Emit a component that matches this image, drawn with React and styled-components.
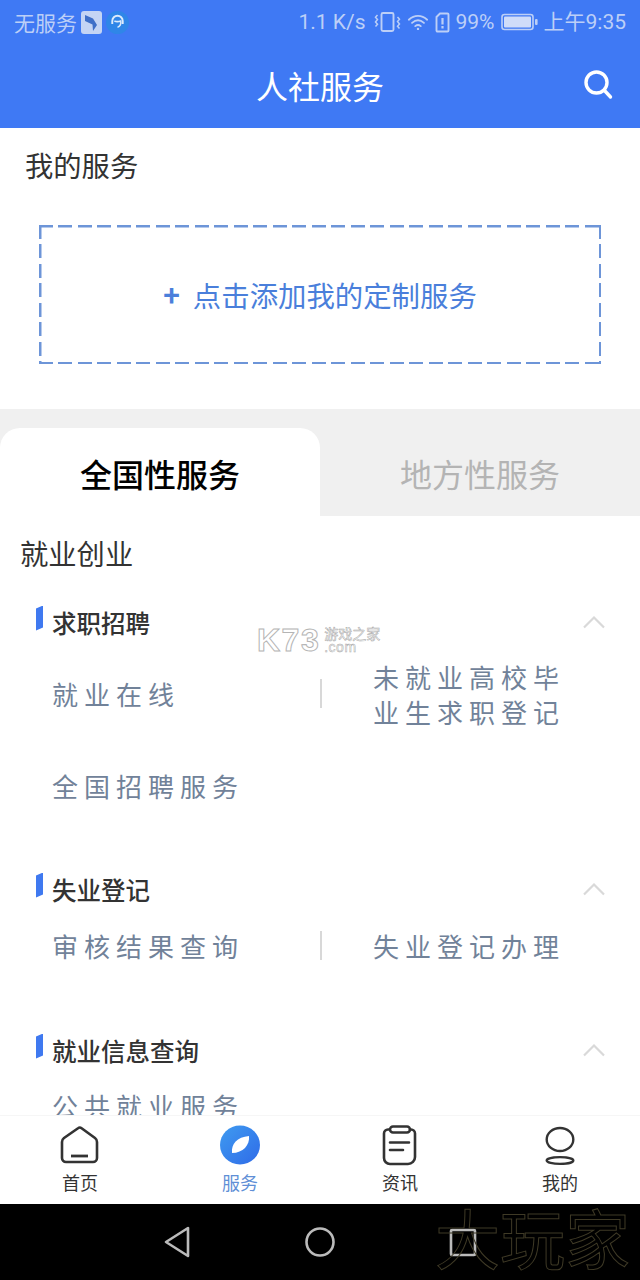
import styled, { createGlobalStyle } from "styled-components";

const cjk = `"Noto Sans CJK SC", "Noto Sans", sans-serif`;

const Global = createGlobalStyle`
  html, body { margin: 0; padding: 0; background: #fff; }
  body { font-family: ${cjk}; }
`;

const Page = styled.div`
  position: relative;
  width: 640px;
  height: 1280px;
  display: flex;
  flex-direction: column;
  overflow: hidden;
`;

const Top = styled.div`
  background: #3f79f4;
  height: 128px;
  flex: none;
  display: flex;
  flex-direction: column;
`;
const StatusBar = styled.div`
  height: 44px;
  padding: 0 14px;
  display: flex;
  align-items: center;
  justify-content: space-between;
  color: #bccff7;
  font-size: 21px;
`;
const StatusGroup = styled.div`
  display: flex;
  align-items: center;
  gap: ${(p) => p.$gap || 4}px;
`;
const StatusText = styled.span`
  font-family: ${(p) => (p.$latin ? `"Roboto", ${cjk}` : cjk)};
  line-height: 44px;
  margin-right: ${(p) => p.$after || 0}px;
`;
const HeaderBar = styled.div`
  position: relative;
  flex: 1;
  display: flex;
  align-items: center;
  justify-content: center;
  padding-bottom: 2px;
`;
const HeaderTitle = styled.h1`
  margin: 0;
  color: #fff;
  font-size: 32px;
  font-weight: 400;
  line-height: 40px;
`;
const SearchBtn = styled.div`
  position: absolute;
  right: 26px;
  top: 24px;
  width: 32px;
  height: 32px;
`;

const Scroll = styled.div`
  flex: 1;
  min-height: 0;
  overflow: hidden;
  background: #fff;
`;
const MyServices = styled.section`
  height: 281px;
  padding: 0 39px 0 25px;
  display: flex;
  flex-direction: column;
`;
const MyTitle = styled.div`
  font-size: 28.3px;
  line-height: 38px;
  margin-top: 18px;
  color: #333;
`;
const dashH = "repeating-linear-gradient(90deg, #6d95d8 0 14px, transparent 14px 19.5px)";
const dashV = "repeating-linear-gradient(180deg, #6d95d8 0 14px, transparent 14px 19.5px)";
const AddBox = styled.div`
  margin: 41px 0 0 14px;
  height: 139px;
  width: 562px;
  flex: none;
  box-sizing: border-box;
  background-image: ${dashH}, ${dashH}, ${dashV}, ${dashV};
  background-size: 100% 2.5px, 100% 2.5px, 2.5px 100%, 2.5px 100%;
  background-position: 0 0, 0 100%, 0 0, 100% 0;
  background-repeat: no-repeat;
  display: flex;
  align-items: center;
  justify-content: center;
  gap: 13px;
  color: #4a7fdb;
  font-size: 28.4px;
  line-height: 40px;
`;
const Plus = styled.span`
  font-weight: 500;
  font-size: 30px;
  font-family: "Roboto", sans-serif;
`;

const TabStrip = styled.div`
  display: flex;
  background: #f0f0f0;
  padding-top: 19px;
  height: 88px;
`;
const Tab = styled.div`
  width: 320px;
  padding-top: 2px;
  display: flex;
  align-items: center;
  justify-content: center;
  font-size: 32px;
  font-weight: ${(p) => (p.$active ? 500 : 400)};
  color: ${(p) => (p.$active ? "#000" : "#b4b4b4")};
  background: ${(p) => (p.$active ? "#fff" : "transparent")};
  border-radius: ${(p) => (p.$active ? "20px 20px 0 0" : "0")};
`;

const CategoryTitle = styled.div`
  font-size: 28.3px;
  line-height: 38px;
  color: #333;
  padding: 18px 0 0 20px;
`;

const Group = styled.section`
  padding: 0 0 0 36px;
  margin-top: ${(p) => p.$top}px;
`;
const GroupHead = styled.div`
  height: 36px;
  display: flex;
  align-items: center;
  gap: 9px;
  padding-right: 34px;
  svg { margin-top: -3px; }
`;
const Marker = styled.i`
  width: 7px;
  height: 25px;
  margin-top: -10px;
  background: #3f79f0;
  clip-path: polygon(0 12%, 100% 0, 100% 88%, 0 100%);
`;
const GroupTitle = styled.div`
  flex: 1;
  font-size: 24.5px;
  font-weight: 500;
  color: #333;
  line-height: 36px;
`;
const ItemRow = styled.div`
  display: grid;
  grid-template-columns: 284px 1fr;
  align-items: center;
  height: ${(p) => p.$height}px;
`;
const ItemCell = styled.div`
  font-size: 26px;
  line-height: 35px;
  letter-spacing: 6px;
  color: #718299;
  padding-left: ${(p) => (p.$right ? "53px" : "16px")};
  width: ${(p) => (p.$right ? "194px" : "auto")};
  box-sizing: content-box;
`;
const Divider = styled.span`
  position: absolute;
  left: 284px;
  top: ${(p) => p.$top || 0}px;
  bottom: 0;
  margin: auto 0;
  width: 2px;
  height: 29px;
  background: #d8d8d8;
`;
const RowWrap = styled.div`
  position: relative;
  padding-top: ${(p) => p.$top || 0}px;
`;

const TabBar = styled.nav`
  flex: none;
  height: 89px;
  background: #fff;
  border-top: 1px solid #f6f6f6;
  box-sizing: border-box;
  display: grid;
  grid-template-columns: repeat(4, 1fr);
`;
const NavItem = styled.div`
  display: flex;
  flex-direction: column;
  align-items: center;
  padding-top: 9px;
  font-size: 18px;
  line-height: 24px;
  color: ${(p) => (p.$active ? "#5f8fd6" : "#333")};
  svg { display: block; margin-bottom: 5px; overflow: visible; }
`;

const SystemBar = styled.div`
  flex: none;
  height: 76px;
  background: #000;
  display: flex;
  align-items: center;
  justify-content: center;
  gap: 112px;
`;

const WatermarkLogo = styled.div`
  position: absolute;
  left: 257px;
  top: 622px;
  display: flex;
  align-items: center;
  gap: 4px;
  pointer-events: none;
`;
const LogoMark = styled.span`
  font-family: "Liberation Sans", sans-serif;
  font-size: 32px;
  font-weight: 700;
  line-height: 36px;
  letter-spacing: 1.5px;
  color: #fff;
  -webkit-text-stroke: 1px #b4b4b4;
`;
const LogoSub = styled.span`
  display: flex;
  flex-direction: column;
  align-items: flex-start;
  font-size: 14px;
  line-height: 14px;
  color: #fff;
  -webkit-text-stroke: 0.5px #a8a8a8;
`;
const LogoDomain = styled.span`
  font-family: "Liberation Sans", sans-serif;
  letter-spacing: 0.5px;
`;
const WatermarkCorner = styled.div`
  position: absolute;
  right: 10px;
  bottom: 16px;
  font-family: ${cjk};
  font-size: 65px;
  line-height: 56px;
  color: transparent;
  -webkit-text-stroke: 1px #3f3a26;
  pointer-events: none;
`;

const Search = () => (
  <svg width="32" height="32" viewBox="0 0 32 32" fill="none" stroke="#fff" strokeWidth="3.4" strokeLinecap="round">
    <circle cx="14.5" cy="14.5" r="10.5" />
    <path d="M22.5 22.5L28.5 29" />
  </svg>
);

const Vibrate = () => (
  <svg width="27" height="22" viewBox="0 0 27 22" fill="none" stroke="#bccff7" strokeWidth="1.9">
    <rect x="7.5" y="2" width="12" height="18" rx="1.5" />
    <path d="M3.5 4l-2 2.3 2 2.3-2 2.4 2 2.3-2 2.3M23.5 6l2 2.3-2 2.3 2 2.4-2 2.3 2 2.3" strokeWidth="1.5" />
  </svg>
);

const Wifi = () => (
  <svg width="22" height="20" viewBox="0 0 24 20" fill="none" stroke="#bccff7" strokeWidth="2" strokeLinecap="round">
    <path d="M2 7.5C8 2 16 2 22 7.5M5.5 11c4-3.5 9-3.5 13 0M9 14.5c2-1.6 4-1.6 6 0" />
    <circle cx="12" cy="17.5" r="1.3" fill="#bccff7" stroke="none" />
  </svg>
);

const SimAlert = () => (
  <svg width="15" height="21" viewBox="0 0 15 21" fill="none" stroke="#bccff7" strokeWidth="1.9">
    <path d="M5 1.5H12.5a1 1 0 0 1 1 1V18.5a1 1 0 0 1-1 1H2.5a1 1 0 0 1-1-1V5z" />
    <path d="M7.5 6v6.5M7.5 14v2.5" strokeWidth="2.2" />
  </svg>
);

const Battery = () => (
  <svg width="37" height="18" viewBox="0 0 37 18">
    <rect x="1" y="1.5" width="31" height="15" rx="2.5" fill="none" stroke="#bccff7" strokeWidth="1.6" />
    <rect x="3" y="3.5" width="27" height="11" rx="1" fill="#cfdcf9" />
    <rect x="34" y="6" width="2.6" height="6" rx="1" fill="#bccff7" />
  </svg>
);

const AppBadge = () => (
  <svg width="21" height="23" viewBox="0 0 21 23">
    <rect width="21" height="23" rx="3" fill="#c4d4f4" />
    <path d="M4 4L12 7.5L16 14L12 20L11.5 13.5L4 10z" fill="#3f6fc8" />
  </svg>
);

const AgentBadge = () => (
  <svg width="23" height="23" viewBox="0 0 22 22" fill="none">
    <circle cx="11" cy="11" r="11" fill="#2f86e8" />
    <path d="M6 12.5V9.5a5 5 0 0 1 10 0V12.5" stroke="#dcebfc" strokeWidth="1.8" />
    <path d="M8 9.5c2 1 4 .8 6 0 .8 2.8-.6 5.5-3 6" stroke="#dcebfc" strokeWidth="1.5" />
  </svg>
);

const Chevron = () => (
  <svg width="24" height="14" viewBox="0 0 24 14" fill="none" stroke="#d9d9d9" strokeWidth="2.2">
    <path d="M2 12.5L12 2.5L22 12.5" />
  </svg>
);

const HomeIcon = () => (
  <svg width="40" height="40" viewBox="0 0 40 40" fill="none" stroke="#333" strokeWidth="2.6" strokeLinejoin="round">
    <path d="M18 3.2a3 3 0 0 1 3.6 0L35 13a5 5 0 0 1 2 4V33a4 4 0 0 1-4 4H6a4 4 0 0 1-4-4V17a5 5 0 0 1 2-4z" />
    <path d="M11 31h17" strokeWidth="2.8" />
  </svg>
);

const LeafIcon = () => (
  <svg width="40" height="40" viewBox="0 0 40 40">
    <defs>
      <linearGradient id="leafBg" x1="0" y1="0" x2="1" y2="1">
        <stop offset="0" stopColor="#3f9bf0" />
        <stop offset="1" stopColor="#2f6be8" />
      </linearGradient>
    </defs>
    <ellipse cx="20" cy="20" rx="20" ry="19.5" fill="url(#leafBg)" />
    <path d="M12 28C11 19 17 12 29 11C30 20 23 28 12 28z" fill="#fff" />
  </svg>
);

const NewsIcon = () => (
  <svg width="36" height="40" viewBox="0 0 36 40" fill="none" stroke="#333" strokeWidth="2.6" strokeLinecap="round">
    <path d="M7 4.5H6a4 4 0 0 0-4 4V33a6 6 0 0 0 6 6H26a7 7 0 0 0 7-7V8.5a4 4 0 0 0-4-4H28" />
    <rect x="8" y="1.5" width="20" height="6" rx="3" />
    <path d="M8 17.5H27M8 25H21" />
  </svg>
);

const MeIcon = () => (
  <svg width="32" height="40" viewBox="0 0 32 40" fill="none" stroke="#333" strokeWidth="2.4">
    <ellipse cx="16" cy="14.5" rx="13.3" ry="11.5" />
    <ellipse cx="16" cy="35.5" rx="13.3" ry="3.4" />
  </svg>
);

const BackKey = () => (
  <svg width="30" height="34" viewBox="0 0 30 34" fill="none" stroke="#bbb" strokeWidth="2.6" strokeLinejoin="round">
    <path d="M26 3V31L4 17z" />
  </svg>
);

const HomeKey = () => (
  <svg width="32" height="32" viewBox="0 0 32 32" fill="none" stroke="#bbb" strokeWidth="2.6">
    <circle cx="16" cy="16" r="13.5" />
  </svg>
);

const RecentKey = () => (
  <svg width="30" height="32" viewBox="0 0 30 32" fill="none" stroke="#bbb" strokeWidth="2.6" strokeLinejoin="round">
    <rect x="3" y="4" width="24" height="25" rx="1" />
  </svg>
);

const groups = [
  {
    title: "求职招聘",
    top: 33,
    rows: [
      { left: "就业在线", right: "未就业高校毕业生求职登记", height: 93, top: 6, divider: true },
      { left: "全国招聘服务", height: 90 },
    ],
  },
  {
    title: "失业登记",
    top: 42,
    rows: [{ left: "审核结果查询", right: "失业登记办理", height: 74, divider: true }],
  },
  {
    title: "就业信息查询",
    top: 51,
    rows: [{ left: "公共就业服务", height: 72 }],
  },
];

const navItems = [
  { label: "首页", icon: <HomeIcon /> },
  { label: "服务", icon: <LeafIcon />, active: true },
  { label: "资讯", icon: <NewsIcon /> },
  { label: "我的", icon: <MeIcon /> },
];

export default function App() {
  return (
    <Page>
      <Global />
      <Top>
        <StatusBar>
          <StatusGroup $gap={4}>
            <StatusText>无服务</StatusText>
            <AppBadge />
            <AgentBadge />
          </StatusGroup>
          <StatusGroup $gap={6}>
            <StatusText $latin $after={2}>1.1 K/s</StatusText>
            <Vibrate />
            <Wifi />
            <SimAlert />
            <StatusText $latin>99%</StatusText>
            <Battery />
            <StatusText $latin>上午9:35</StatusText>
          </StatusGroup>
        </StatusBar>
        <HeaderBar>
          <HeaderTitle>人社服务</HeaderTitle>
          <SearchBtn>
            <Search />
          </SearchBtn>
        </HeaderBar>
      </Top>
      <Scroll>
        <MyServices>
          <MyTitle>我的服务</MyTitle>
          <AddBox>
            <Plus>+</Plus>
            <span>点击添加我的定制服务</span>
          </AddBox>
        </MyServices>
        <TabStrip>
          <Tab $active>全国性服务</Tab>
          <Tab>地方性服务</Tab>
        </TabStrip>
        <CategoryTitle>就业创业</CategoryTitle>
        {groups.map((group) => (
          <Group key={group.title} $top={group.top}>
            <GroupHead>
              <Marker />
              <GroupTitle>{group.title}</GroupTitle>
              <Chevron />
            </GroupHead>
            {group.rows.map((row) => (
              <RowWrap key={row.left} $top={row.top}>
                <ItemRow $height={row.height}>
                  <ItemCell>{row.left}</ItemCell>
                  {row.right && <ItemCell $right>{row.right}</ItemCell>}
                </ItemRow>
                {row.divider && <Divider $top={row.top} />}
              </RowWrap>
            ))}
          </Group>
        ))}
      </Scroll>
      <TabBar>
        {navItems.map((item) => (
          <NavItem key={item.label} $active={item.active}>
            {item.icon}
            {item.label}
          </NavItem>
        ))}
      </TabBar>
      <SystemBar>
        <BackKey />
        <HomeKey />
        <RecentKey />
      </SystemBar>
      <WatermarkLogo>
        <LogoMark>K73</LogoMark>
        <LogoSub>
          <span>游戏之家</span>
          <LogoDomain>.com</LogoDomain>
        </LogoSub>
      </WatermarkLogo>
      <WatermarkCorner>大玩家</WatermarkCorner>
    </Page>
  );
}
